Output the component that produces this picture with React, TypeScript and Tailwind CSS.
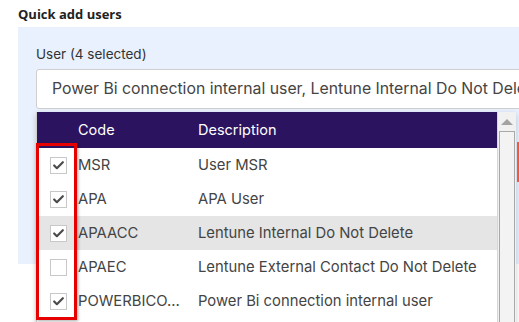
import { Check } from 'lucide-react';

type Row = { code: string; desc: string; checked: boolean; active?: boolean };

const rows: Row[] = [
  { code: 'MSR', desc: 'User MSR', checked: true },
  { code: 'APA', desc: 'APA User', checked: true },
  { code: 'APAACC', desc: 'Lentune Internal Do Not Delete', checked: true, active: true },
  { code: 'APAEC', desc: 'Lentune External Contact Do Not Delete', checked: false },
  { code: 'POWERBICO...', desc: 'Power Bi connection internal user', checked: true },
];

function CheckBox({ checked }: { checked: boolean }) {
  return (
    <span className="flex h-[17px] w-[17px] items-center justify-center border border-[#c8c8c8] bg-white">
      {checked && <Check size={13} strokeWidth={4} className="text-[#4a4a4a]" />}
    </span>
  );
}

export default function App() {
  return (
    <div
      className="relative h-[322px] w-[519px] overflow-hidden bg-white"
      style={{ fontFamily: 'Inter, "Noto Sans", sans-serif' }}
    >
      <div className="pl-[18px] pt-[4px] text-[13px] font-bold leading-[20px] text-[#222]" style={{ fontFamily: '"Open Sans", sans-serif' }}>
        Quick add users
      </div>

      <div className="ml-[18px] mt-[3px] h-[237px] bg-[#e8f1fd] pl-[18px] pt-[17px]">
        <div className="text-[13.5px] leading-[20px] text-[#333]">User (4 selected)</div>
        <div className="mt-[5px] flex h-[40px] w-[500px] items-center rounded-[3px] border border-[#cfcfcf] bg-white pl-[15px] text-[15.8px] whitespace-nowrap text-[#444]">
          Power Bi connection internal user, Lentune Internal Do Not Delete
        </div>
      </div>

      {/* dropdown overlay */}
      <div className="absolute left-[36px] top-[112px] flex w-[480px] border-l border-[#d0d0d0] bg-white shadow-[0_2px_6px_rgba(0,0,0,0.2)]">
        <div className="w-[461px]">
          <div className="flex h-[36px] items-center bg-[#2b1360] text-[14.5px] text-white">
            <div className="w-[41px]" />
            <div className="w-[120px]">Code</div>
            <div>Description</div>
          </div>
          {rows.map((r) => (
            <div
              key={r.code}
              className={`flex h-[34px] items-center text-[14.8px] text-[#444] ${r.active ? 'bg-[#e5e5e5]' : 'bg-white'}`}
            >
              <div className="flex w-[41px] justify-center pl-[2px]">
                <CheckBox checked={r.checked} />
              </div>
              <div className="w-[120px] whitespace-nowrap">{r.code}</div>
              <div className="whitespace-nowrap">{r.desc}</div>
            </div>
          ))}
        </div>
        <div className="flex w-[19px] flex-col items-center border-l border-[#d6d6d6] bg-[#f1f1f1]">
          <div className="flex h-[19px] items-center justify-center">
            <span className="h-0 w-0 border-x-[6px] border-b-[6px] border-x-transparent border-b-[#a3a3a3]" />
          </div>
          <div className="h-[200px] w-[16px] border border-[#a8a8a8] bg-[#f3f3f3]" />
        </div>
      </div>

      {/* button peeking at the right edge */}
      <div className="absolute left-[517px] top-[142px] h-[40px] w-[10px] bg-[#f05a3c]" />

      {/* annotation */}
      <div className="absolute left-[36px] top-[143px] h-[177px] w-[41px] border-[3px] border-[#e60000] shadow-[1px_1px_3px_rgba(0,0,0,0.35)]" />
    </div>
  );
}
